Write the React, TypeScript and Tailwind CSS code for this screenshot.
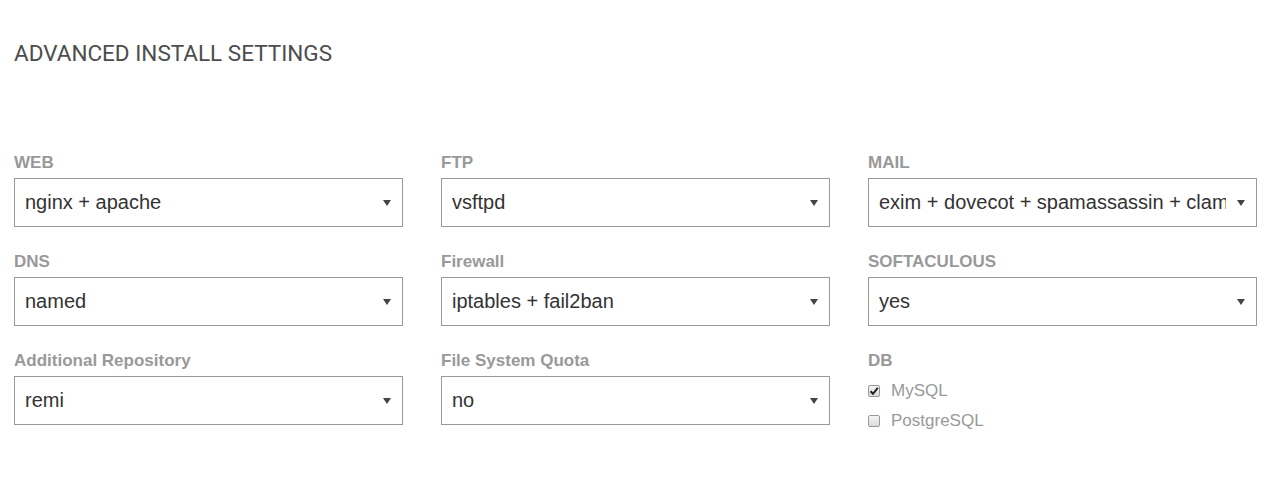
import React from "react";

function Select({ value }: { value: string }) {
  return (
    <div className="relative h-[49px] w-full border border-[#999] bg-white">
      <div className="flex h-full items-center pl-[10px] pr-[30px]">
        <div className="w-full overflow-hidden whitespace-nowrap text-[20px] leading-[47px] text-[#333]">{value}</div>
      </div>
      <div className="absolute right-[11px] top-[21px] h-0 w-0 border-x-[4px] border-t-[6px] border-x-transparent border-t-[#444]" />
    </div>
  );
}

function Field({ label, value }: { label: string; value: string }) {
  return (
    <div className="flex flex-col">
      <div className="h-[25px] text-[17px] font-bold leading-[20px] text-[#999]">{label}</div>
      <Select value={value} />
    </div>
  );
}

function Check({ label, checked }: { label: string; checked?: boolean }) {
  return (
    <label className="flex h-[30px] items-center text-[17px] text-[#999]">
      <span className="mr-[11px] flex h-[12px] w-[12px] items-center justify-center rounded-[2px] border border-[#999] bg-gradient-to-b from-[#f4f4f4] to-[#dcdcdc]">
        {checked && (
          <svg width="10" height="10" viewBox="0 0 10 10">
            <path d="M1.5 5.2 L4 7.8 L8.8 1.8" fill="none" stroke="#222" strokeWidth="2" />
          </svg>
        )}
      </span>
      {label}
    </label>
  );
}

export default function App() {
  return (
    <div className="min-h-[480px] bg-white px-[14px] pt-[38px]" style={{ fontFamily: '"Liberation Sans", Arial, sans-serif' }}>
      <h1 className="text-[22.5px] leading-[30px] text-[#4d4d4d]" style={{ fontFamily: "Roboto, sans-serif" }}>
        ADVANCED INSTALL SETTINGS
      </h1>
      <div className="mt-[85px] grid w-[1243px] grid-cols-3 gap-x-[38px] gap-y-[25px]">
        <Field label="WEB" value="nginx + apache" />
        <Field label="FTP" value="vsftpd" />
        <Field label="MAIL" value="exim + dovecot + spamassassin + clamav" />
        <Field label="DNS" value="named" />
        <Field label="Firewall" value="iptables + fail2ban" />
        <Field label="SOFTACULOUS" value="yes" />
        <Field label="Additional Repository" value="remi" />
        <Field label="File System Quota" value="no" />
        <div className="flex flex-col">
          <div className="h-[25px] text-[17px] font-bold leading-[20px] text-[#999]">DB</div>
          <Check label="MySQL" checked />
          <Check label="PostgreSQL" />
        </div>
      </div>
    </div>
  );
}
